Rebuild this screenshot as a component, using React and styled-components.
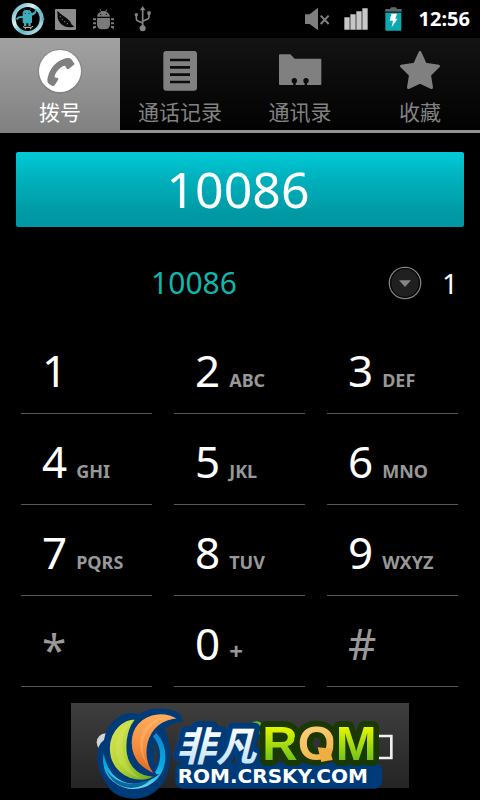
import React, { useState } from "react";
import styled, { createGlobalStyle } from "styled-components";

const GlobalStyle = createGlobalStyle`
  * { box-sizing: border-box; }
  body {
    margin: 0;
    background: #000;
    color: #fff;
    font-family: "Noto Sans", "Noto Sans CJK SC", sans-serif;
  }
  button, input { font: inherit; color: inherit; border: 0; margin: 0; padding: 0; background: none; }
  button { cursor: pointer; }
`;

const Screen = styled.main`
  display: flex;
  flex-direction: column;
  min-height: 100vh;
  overflow: hidden;
  background: #000;
`;

const StatusBar = styled.header`
  display: flex;
  align-items: center;
  justify-content: space-between;
  height: 38px;
  padding: 0 10px 0 11px;
`;

const StatusGroup = styled.div`
  display: flex;
  align-items: center;
  gap: ${(p) => p.$gap}px;
`;

const Clock = styled.time`
  font-size: 20px;
  line-height: 24px;
  font-weight: 700;
`;

const TabBar = styled.nav`
  display: grid;
  grid-template-columns: repeat(4, 1fr);
  height: 95px;
`;

const Tab = styled.button`
  display: flex;
  flex-direction: column;
  align-items: center;
  padding-top: 9px;
  color: ${(p) => (p.$active ? "#fff" : "#828282")};
  background: ${(p) =>
    p.$active ? "linear-gradient(#a2a2a2, #808080)" : "linear-gradient(#131313, #020202)"};
  border-bottom: ${(p) => (p.$active ? "0" : "3px solid #929292")};
`;

const TabLabel = styled.span`
  font-family: "Noto Sans CJK SC", sans-serif;
  font-size: 21px;
  line-height: 32px;
`;

const NumberField = styled.input`
  && {
    margin: 19px 16px 0;
    height: 75px;
    border-radius: 2px;
    background: linear-gradient(#00cad8, #00b4c0 30%, #0098a2 85%, #0098a2);
    font-size: 50px;
    line-height: 75px;
    text-align: center;
    padding-right: 4px;
    outline: 0;
  }
`;

const MatchRow = styled.section`
  display: flex;
  align-items: center;
  height: 96px;
  padding: 16px 22px 0 0;
`;

const MatchNumber = styled.button`
  && {
    flex: 1;
    font-size: 30px;
    line-height: 40px;
    color: #10b6ae;
  }
`;

const ExpandButton = styled.button`
  display: flex;
  margin-right: 20px;
`;

const MatchCount = styled.span`
  font-size: 28px;
  line-height: 40px;
`;

const Keypad = styled.section`
  display: grid;
  grid-template-columns: repeat(3, 1fr);
  grid-auto-rows: 91px;
  column-gap: 22px;
  padding: 0 22px 0 21px;
`;

const Key = styled.button`
  && {
    display: flex;
    align-items: ${(p) => (p.$low ? "center" : "baseline")};
    gap: 9px;
    padding: 16px 0 0 21px;
    border-bottom: 1px solid #585858;
    color: ${(p) => (p.$dim ? "#9a9a9a" : "#fff")};
  }
`;

const Digit = styled.span`
  font-size: 44px;
  line-height: 62px;
`;

const Letters = styled.span`
  font-size: ${(p) => (p.$symbol ? 24 : 18)}px;
  line-height: 24px;
  font-weight: 700;
  color: #989898;
`;

const CallArea = styled.footer`
  padding: 16px 71px 0;
`;

const CallButton = styled.button`
  && {
    position: relative;
    display: block;
    width: 100%;
    height: 85px;
    background: linear-gradient(#3e3e3e, #242424);
  }
`;

const Logo = styled.svg`
  position: absolute;
  top: 0;
  left: 0;
  width: 100%;
  overflow: visible;
`;

function ModIcon() {
  return (
    <svg width="34" height="34" viewBox="34 6 102 102" aria-label="CyanogenMod">
      <defs>
        <linearGradient id="ring" x1="0" y1="0" x2="1" y2="1">
          <stop offset="0" stopColor="#4fa8b8" />
          <stop offset=".35" stopColor="#d8f2f6" />
          <stop offset=".6" stopColor="#62b5c4" />
          <stop offset="1" stopColor="#c8eaf0" />
        </linearGradient>
      </defs>
      <circle cx="84" cy="57" r="42" fill="#000" stroke="url(#ring)" strokeWidth="12" />
      <path d="M69 48V39Q70 30 82 30Q95 30 96 39L104 36 107 26 112 30 107 42 97 47V67Q97 70 93 70V78H86V70H80V78H73V70Q69 70 69 66V54L59 55 52 61 49 55 58 49Z" fill="#3eabb9" />
      <path d="M73 28l4 6M92 28l-4 6" stroke="#3eabb9" strokeWidth="2" />
      <circle cx="77" cy="40" r="2" fill="#0b3c44" /><circle cx="88" cy="40" r="2" fill="#0b3c44" />
      <path d="M70 79Q72 82 76 82H94Q98 82 100 78" fill="none" stroke="#e9cfc0" strokeWidth="3" />
      <circle cx="77" cy="86" r="2" fill="#bbb" /><circle cx="93" cy="86" r="2" fill="#bbb" />
      <path d="M126 49l9 8-9 8z" fill="#58aebd" />
    </svg>
  );
}

function PeaIcon() {
  return (
    <svg width="21" height="21" viewBox="165 24 63 63" aria-hidden="true">
      <rect x="165" y="24" width="63" height="63" rx="3" fill="#8c8c8c" />
      <path d="M171 30l5 3Q182 40 196 49Q212 59 214 70L223 77 212 79Q192 80 181 67Q171 55 173 39Z" fill="#080808" />
      <g fill="#777">
        <circle cx="181" cy="47" r="2" /><circle cx="187" cy="55" r="2" /><circle cx="194" cy="62" r="2" />
        <circle cx="202" cy="68" r="2" />
      </g>
    </svg>
  );
}

function BugIcon() {
  return (
    <svg width="21" height="21" viewBox="279 23 63 63" fill="#7a7a7a" aria-hidden="true">
      <path d="M291 46Q292 34 303 31L299 25 301 24 305 30Q311 28 316 30L320 24 322 25 318 31Q329 35 330 46Z" />
      <path d="M291 50H330V69Q330 84 315 84H306Q291 84 291 69Z" />
      <path d="M279 51h9v6h-9zM279 63h9v6h-9zM279 75l9-2v6l-9 4zM333 51h9v6h-9zM333 63h9v6h-9zM333 73l9 2v8l-9-4z" />
      <circle cx="302" cy="39" r="2" fill="#000" /><circle cx="319" cy="39" r="2" fill="#000" />
    </svg>
  );
}

function UsbIcon() {
  return (
    <svg width="17" height="26" viewBox="400 17 51 78" aria-hidden="true">
      <g fill="none" stroke="#858585" strokeWidth="5">
        <path d="M426 28V82M407 46V55Q407 60 412 62L426 68M445 39V49Q445 54 441 56L426 63" />
      </g>
      <g fill="#858585">
        <path d="M426 17l8 13h-16z" /><circle cx="426" cy="84" r="9" />
        <circle cx="407" cy="43" r="5" /><path d="M440 33h10v10h-10z" />
      </g>
    </svg>
  );
}

function MutedIcon() {
  return (
    <svg width="25" height="24" viewBox="189 21 75 72" aria-label="Muted">
      <path d="M189 43h14L228 23V91L203 72H189Z" fill="#7f7f7f" />
      <path d="M236 47l24 25M260 47l-24 25" stroke="#7f7f7f" strokeWidth="6" />
    </svg>
  );
}

function SignalIcon() {
  return (
    <svg width="24" height="22" viewBox="305 26 72 66" aria-label="Signal">
      <path d="M306 54h16v37h-16zM324 45h16v46h-16zM342 36h16v55h-16zM360 27h16v64h-16z" fill="#c6c6c6" />
    </svg>
  );
}

function BatteryIcon() {
  return (
    <svg width="17" height="24" viewBox="428 20 51 72" aria-label="Charging">
      <path d="M429 26h14l3-5h15l3 5h14v10h-49z" fill="#5f686a" />
      <path d="M431 33h45v6h-45z" fill="#18363a" />
      <path d="M429 38h48v51q0 2-2 2h-44q-2 0-2-2z" fill="#0ba9b2" />
      <path d="M447 40h17l-5 15h7L448 81l4-20h-10z" fill="#fff" />
    </svg>
  );
}

function DialIcon() {
  return (
    <svg width="48" height="48" viewBox="108 33 144 144" aria-hidden="true">
      <circle cx="180" cy="106" r="67" fill="#777" opacity=".5" />
      <circle cx="180" cy="105" r="63" fill="#fff" />
      <path d="M142 132Q144 112 157 94Q171 75 192 68Q204 64 213 68L224 84 220 88 206 99 201 99 195 89Q182 91 171 106Q163 117 164 124L175 127 174 132 163 149 157 150 146 143Q141 139 142 132Z" fill="#808080" />
    </svg>
  );
}

function LogIcon() {
  return (
    <svg width="48" height="48" viewBox="468 33 144 144" aria-hidden="true">
      <rect x="490" y="45" width="101" height="119" rx="9" fill="#808080" />
      <path d="M510 72h60M510 94h60M510 116h60M510 138h60" stroke="#0c0c0c" strokeWidth="8" />
    </svg>
  );
}

function ContactsIcon() {
  return (
    <svg width="48" height="48" viewBox="108 33 144 144" aria-hidden="true">
      <path d="M117 58q0-3 3-3h31l13 13h77q3 0 3 3v73q0 3-3 3H120q-3 0-3-3z" fill="#808080" />
      <g fill="#0a0a0a">
        <circle cx="163" cy="134" r="8" /><circle cx="198" cy="134" r="8" />
        <path d="M160 138h7v10h-7zM194 138h7v10h-7z" />
      </g>
    </svg>
  );
}

function StarIcon() {
  return (
    <svg width="48" height="48" viewBox="468 33 144 144" aria-hidden="true">
      <path d="M540 49L556 84 596 90 569 117 575 155 540 139 505 155 511 117 484 90 524 84Z" fill="#808080" stroke="#808080" strokeWidth="8" strokeLinejoin="round" />
    </svg>
  );
}

function ExpandIcon() {
  return (
    <svg width="34" height="34" viewBox="0 0 102 102" aria-hidden="true">
      <circle cx="51" cy="51" r="47" fill="#202020" stroke="#858585" strokeWidth="4" />
      <circle cx="51" cy="51" r="43" fill="none" stroke="#080808" strokeWidth="4" />
      <path d="M33 43h36L51 63z" fill="#858585" />
    </svg>
  );
}

function RomLogo() {
  return (
    <Logo viewBox="33 39 1014 291" role="img" aria-label="非凡ROM">
      <defs>
        <linearGradient id="leaf" x1="0" y1="0" x2="1" y2="1">
          <stop offset="0" stopColor="#dde85c" /><stop offset=".5" stopColor="#b4d334" /><stop offset="1" stopColor="#5da522" />
        </linearGradient>
        <linearGradient id="flame" x1="0" y1="0" x2="0" y2="1">
          <stop offset="0" stopColor="#ffae5c" /><stop offset=".6" stopColor="#f28a3b" /><stop offset="1" stopColor="#dd6418" />
        </linearGradient>
        <linearGradient id="sea" x1="0" y1="0" x2="0" y2="1">
          <stop offset="0" stopColor="#1184cd" /><stop offset=".6" stopColor="#06abe0" /><stop offset="1" stopColor="#70d8ec" />
        </linearGradient>
        <linearGradient id="ice" x1="0" y1="0" x2="0" y2="1">
          <stop offset=".2" stopColor="#fff" /><stop offset="1" stopColor="#b7ddf5" />
        </linearGradient>
        <linearGradient id="lime" x1="0" y1="0" x2="0" y2="1">
          <stop offset=".2" stopColor="#e4f600" /><stop offset=".9" stopColor="#61bb20" />
        </linearGradient>
        <linearGradient id="gold" x1="0" y1="0" x2="1" y2="1">
          <stop offset="0" stopColor="#ffe3a0" /><stop offset="1" stopColor="#ef9d20" />
        </linearGradient>
      </defs>

      <circle cx="137" cy="157" r="27" fill="#d4d4d4" />
      <path d="M950 138h44v66h-44" fill="none" stroke="#f0f0f0" strokeWidth="8" />

      <path d="M112 206Q108 168 132 150Q139 102 177 80Q207 62 235 73Q272 50 319 57Q369 64 367 96Q337 95 313 119Q334 158 329 211Q324 275 284 306Q248 333 201 324Q157 318 137 278Q114 246 112 206Z" fill="#003b79" />
      <path d="M131 190Q122 246 160 275Q202 308 252 292Q309 271 316 208Q318 158 289 129L279 139Q306 172 299 211Q288 266 239 280Q191 288 157 251Q135 221 131 190Z" fill="url(#sea)" />
      <path d="M139 239Q158 273 207 281Q255 284 284 250Q263 292 214 294Q158 290 139 239Z" fill="#08679f" />
      <path d="M231 86C190 83 148 120 147 174C147 236 194 272 247 272Q271 270 289 256C244 262 210 232 203 190C198 150 208 108 231 86Z" fill="url(#leaf)" stroke="#003b79" strokeWidth="5" />
      <path d="M218 94C175 128 172 224 244 266C193 251 161 213 168 160Q176 112 218 94Z" fill="#e6f07a" opacity=".25" />
      <path d="M356 87C318 62 265 65 233 100C205 132 206 186 235 221Q255 243 289 256C264 228 257 196 265 160C275 118 306 90 356 87Z" fill="url(#flame)" stroke="#003b79" strokeWidth="5" />
      <path d="M323 82C270 86 240 122 240 162Q242 205 271 237C244 205 242 150 263 120Q285 92 323 82Z" fill="#ffc98b" opacity=".35" />
      <path d="M281 164Q291 190 284 222" fill="none" stroke="#343434" strokeWidth="9" />

      <rect x="346" y="218" width="620" height="78" rx="22" fill="#003b79" />
      <circle cx="590" cy="114" r="20" fill="#65bc38" />
      <text x="348" y="212" fontFamily="Noto Sans CJK SC, sans-serif" fontSize="120" fontWeight="700" fontStyle="italic" fill="url(#ice)" stroke="#003b79" strokeWidth="36" strokeLinejoin="round" paintOrder="stroke">非凡</text>
      <text x="607" y="210" fontFamily="Liberation Sans, sans-serif" fontSize="147" fontWeight="700" fill="url(#lime)" stroke="#193900" strokeWidth="34" strokeLinejoin="round" paintOrder="stroke">R<tspan fill="url(#gold)">O</tspan>M</text>
      <path d="M773 172l46 4-5 20 4 14-16 2-18 4z" fill="#efae42" />
      <text x="353" y="280" fontFamily="DejaVu Sans, sans-serif" fontSize="60" fontWeight="700" fill="#fff">ROM.CRSKY.COM</text>
    </Logo>
  );
}

const TABS = [
  { label: "拨号", Icon: DialIcon },
  { label: "通话记录", Icon: LogIcon },
  { label: "通讯录", Icon: ContactsIcon },
  { label: "收藏", Icon: StarIcon },
];

const KEYS = [
  { digit: "1" },
  { digit: "2", letters: "ABC" },
  { digit: "3", letters: "DEF" },
  { digit: "4", letters: "GHI" },
  { digit: "5", letters: "JKL" },
  { digit: "6", letters: "MNO" },
  { digit: "7", letters: "PQRS" },
  { digit: "8", letters: "TUV" },
  { digit: "9", letters: "WXYZ" },
  { digit: "*", dim: true, low: true },
  { digit: "0", letters: "+", symbol: true },
  { digit: "#", dim: true },
];

export default function App() {
  const [number, setNumber] = useState("10086");
  const [tab, setTab] = useState(0);

  return (
    <>
      <GlobalStyle />
      <Screen>
        <StatusBar>
          <StatusGroup $gap={17}>
            <StatusGroup $gap={10}>
              <ModIcon />
              <PeaIcon />
            </StatusGroup>
            <StatusGroup $gap={20}>
              <BugIcon />
              <UsbIcon />
            </StatusGroup>
          </StatusGroup>
          <StatusGroup $gap={17}>
            <StatusGroup $gap={14}>
              <MutedIcon />
              <SignalIcon />
            </StatusGroup>
            <BatteryIcon />
            <Clock>12:56</Clock>
          </StatusGroup>
        </StatusBar>

        <TabBar>
          {TABS.map(({ label, Icon }, i) => (
            <Tab key={label} type="button" $active={i === tab} onClick={() => setTab(i)}>
              <Icon />
              <TabLabel>{label}</TabLabel>
            </Tab>
          ))}
        </TabBar>

        <NumberField
          type="tel"
          aria-label="号码"
          value={number}
          onChange={(e) => setNumber(e.target.value)}
        />

        <MatchRow>
          <MatchNumber type="button">10086</MatchNumber>
          <ExpandButton type="button" aria-label="展开">
            <ExpandIcon />
          </ExpandButton>
          <MatchCount>1</MatchCount>
        </MatchRow>

        <Keypad>
          {KEYS.map(({ digit, letters, dim, low, symbol }) => (
            <Key
              key={digit}
              type="button"
              $dim={dim}
              $low={low}
              onClick={() => setNumber(number + digit)}
            >
              <Digit>{digit}</Digit>
              {letters && <Letters $symbol={symbol}>{letters}</Letters>}
            </Key>
          ))}
        </Keypad>

        <CallArea>
          <CallButton type="button">
            <RomLogo />
          </CallButton>
        </CallArea>
      </Screen>
    </>
  );
}
